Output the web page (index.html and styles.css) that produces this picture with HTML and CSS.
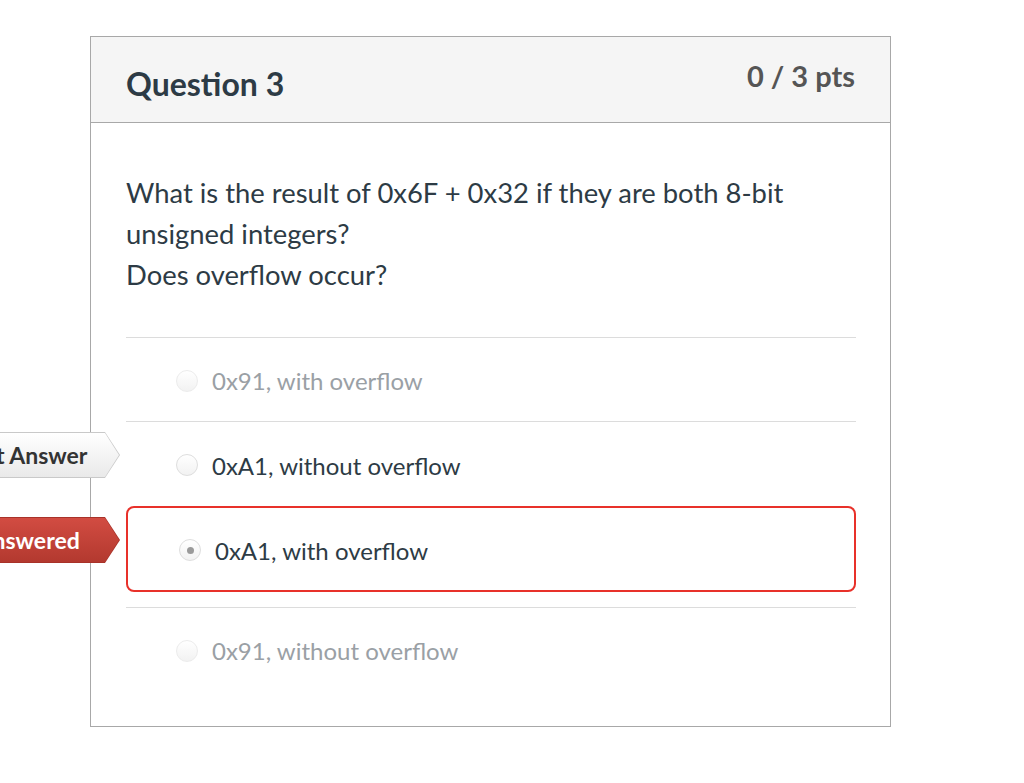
FILE: index.html
```html
<!DOCTYPE html>
<html lang="en">
<head>
<meta charset="utf-8">
<title>Question 3</title>
<link rel="stylesheet" href="styles.css">
</head>
<body>
<div class="page">
  <div class="question">
    <div class="header">
      <h2 class="title">Question 3</h2>
      <div class="points">0 / 3 pts</div>
    </div>
    <div class="content">
      <div class="text">What is the result of 0x6F + 0x32 if they are both 8-bit<br>unsigned integers?<br>Does overflow occur?</div>
      <div class="answers">
        <div class="answer muted">
          <span class="radio"></span>
          <span class="label">0x91, with overflow</span>
        </div>
        <div class="answer second">
          <div class="arrow correct"><div class="arrow-inner">Correct Answer</div></div>
          <span class="radio"></span>
          <span class="label">0xA1, without overflow</span>
        </div>
        <div class="answer selected">
          <div class="arrow wrong"><div class="arrow-inner">You Answered</div></div>
          <span class="radio checked"></span>
          <span class="label">0xA1, with overflow</span>
        </div>
        <div class="answer muted">
          <span class="radio"></span>
          <span class="label">0x91, without overflow</span>
        </div>
      </div>
    </div>
  </div>
</div>
</body>
</html>
```
FILE: styles.css
```css
*, *::before, *::after {
  box-sizing: border-box;
}
html, body {
  margin: 0;
  padding: 0;
  background: #fff;
}
body {
  font-family: Lato, "Open Sans", "Liberation Sans", sans-serif;
  color: #2d3b45;
  overflow: hidden;
}
.page {
  padding: 36px 0 0 90px;
}
.question {
  width: 801px;
  border: 1px solid #a8a8a8;
}
.header {
  height: 86px;
  background: #f5f5f5;
  border-bottom: 1px solid #a8a8a8;
  display: flex;
  justify-content: space-between;
  align-items: flex-start;
  padding: 0 35px 0 35px;
}
.title {
  margin: 0;
  padding-top: 27px;
  font-size: 32px;
  font-weight: 700;
  line-height: 40px;
  color: #2d3b45;
}
.points {
  padding-top: 21px;
  font-size: 29px;
  font-weight: 700;
  line-height: 36px;
  color: #555;
}
.content {
  padding: 49px 34px 35px 35px;
}
.text {
  font-size: 27.4px;
  line-height: 41px;
}
.answers {
  margin-top: 42px;
}
.answer {
  position: relative;
  height: 84px;
  border-top: 1px solid #dcdcdc;
  display: flex;
  align-items: center;
  padding-left: 50px;
  padding-top: 2px;
  font-size: 24px;
}
.answer.second {
  height: 85px;
}
.answer.muted {
  color: #9aa0a5;
}
.answer.selected {
  height: 86px;
  border: 2px solid #e8312a;
  border-radius: 8px;
  padding-left: 51px;
  margin-bottom: 15px;
}
.radio {
  width: 22px;
  height: 22px;
  border: 1px solid #dedede;
  border-radius: 50%;
  background: linear-gradient(#ffffff, #f2f2f2);
  margin-right: 14px;
  flex: none;
  display: flex;
  align-items: center;
  justify-content: center;
}
.answer.muted .radio {
  border-color: #ececec;
}
.radio.checked::after {
  content: "";
  width: 7px;
  height: 7px;
  border-radius: 50%;
  background: #9a9a9a;
}
.arrow {
  position: absolute;
  right: calc(100% + 6px);
  top: 10px;
  width: 215px;
  height: 46px;
  clip-path: polygon(0 0, calc(100% - 15px) 0, 100% 50%, calc(100% - 15px) 100%, 0 100%);
}
.answer.selected .arrow {
  right: calc(100% + 8px);
  top: 9px;
}
.arrow-inner {
  position: absolute;
  inset: 1px;
  clip-path: polygon(0 0, calc(100% - 14px) 0, 100% 50%, calc(100% - 14px) 100%, 0 100%);
  display: flex;
  align-items: center;
  justify-content: center;
  padding-right: 14px;
  font-size: 23px;
  font-weight: 700;
}
.arrow.correct {
  background: #c9c9c9;
}
.arrow.correct .arrow-inner {
  background: linear-gradient(#ffffff, #e9e9e9);
  color: #333;
  padding-right: 10px;
}
.arrow.wrong {
  background: #a83229;
}
.arrow.wrong .arrow-inner {
  background: linear-gradient(#d24c42, #b3392f);
  color: #fff;
  padding-right: 12px;
}
```
